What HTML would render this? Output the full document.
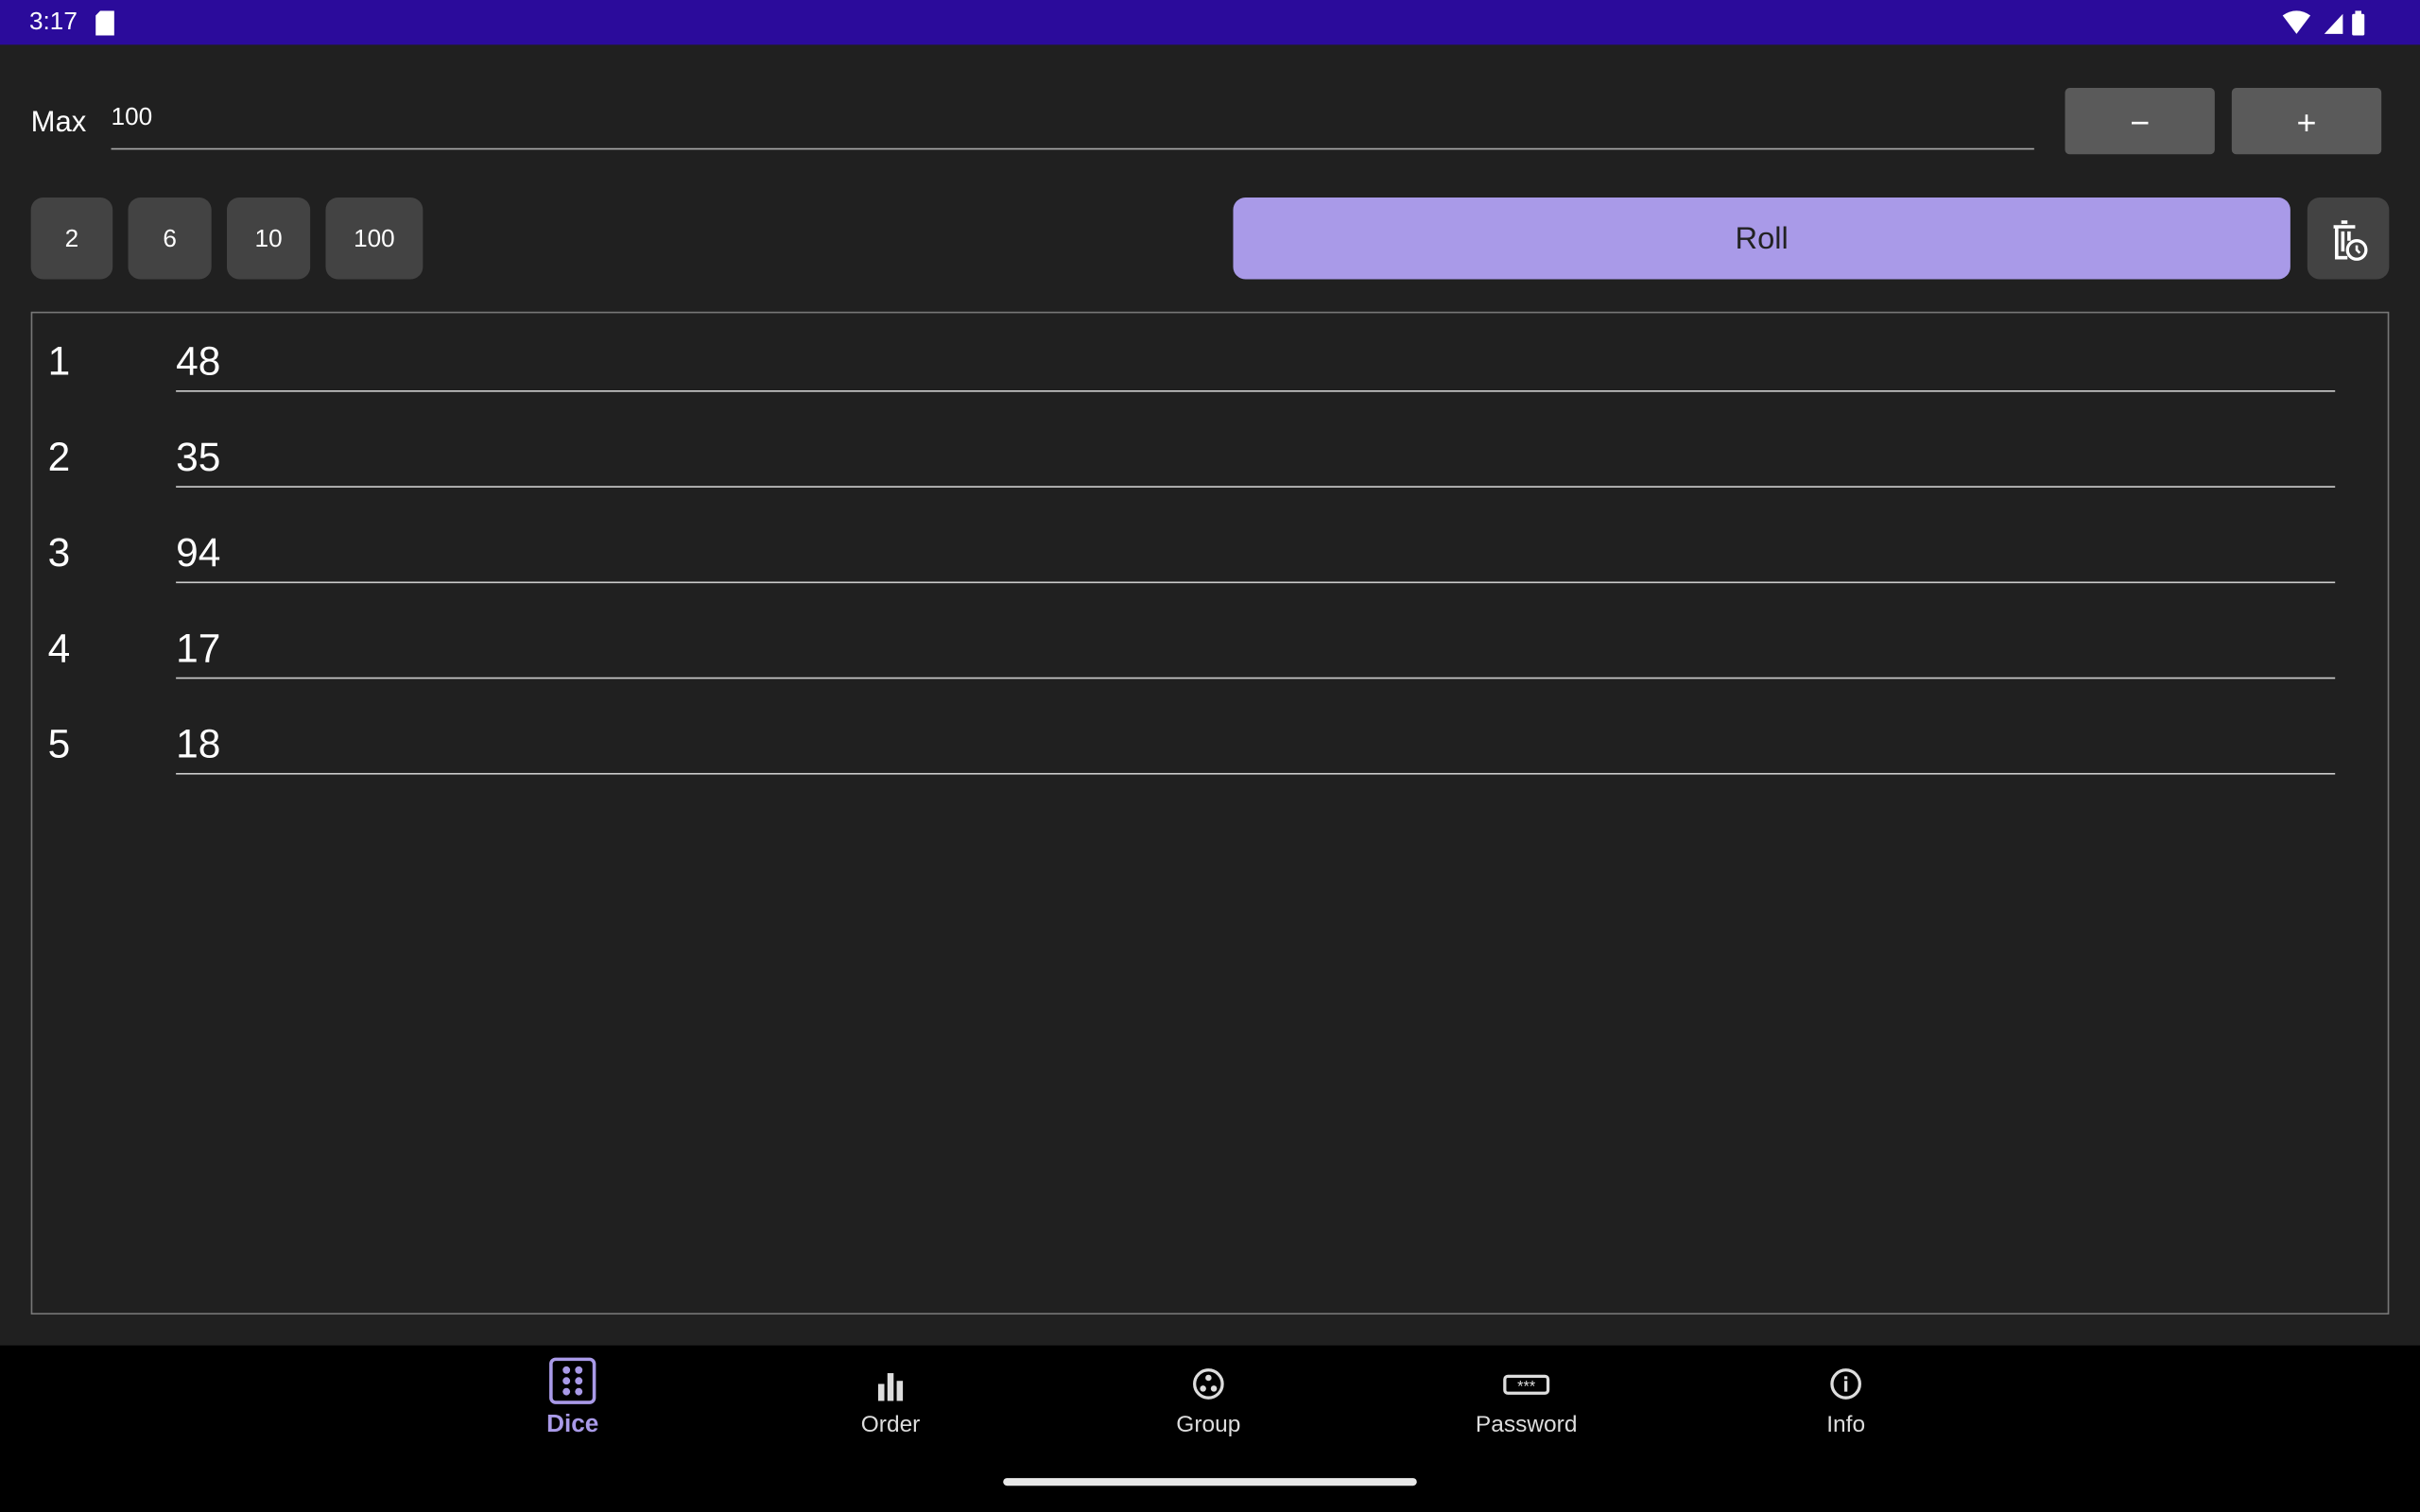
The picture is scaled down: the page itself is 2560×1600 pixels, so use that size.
<!DOCTYPE html>
<html><head><meta charset="utf-8"><style>
html,body{margin:0;padding:0;background:#202020;overflow:hidden;width:2560px;height:1600px}
#s{position:absolute;left:0;top:0;width:1568px;height:980px;transform:scale(1.632653);transform-origin:0 0;font-family:"Liberation Sans",Roboto,sans-serif;color:#fff}
.a{position:absolute}
.chip{position:absolute;top:128px;height:53px;padding-top:2px;box-sizing:border-box;background:#434343;border-radius:8px;display:flex;align-items:center;justify-content:center;font-size:16px}
.num{position:absolute;left:31px;font-size:26px}
.val{position:absolute;left:114px;font-size:26px}
.ul{position:absolute;left:114px;width:1399px;height:1px;background:#ccc}
.nav{position:absolute;top:883px;width:120px;text-align:center;font-size:15px;color:#ddd}
.nav svg{display:block;margin:0 auto 4px}
</style></head><body><div id="s">
<div class="a" style="left:0;top:0;width:1568px;height:29px;background:#2b0b9b"></div>
<div class="a" style="left:19px;top:6px;font-size:16px">3:17</div>
<svg class="a" style="left:61px;top:7px" width="14" height="16"><path d="M4 0h9v16H1V3z" fill="#fff"/></svg>
<svg class="a" style="left:1478px;top:6px" width="60" height="18"><path d="M1 4Q10-2 19 4L10 16z" fill="#fff"/><path d="M28 16L40 3V16z" fill="#fff"/><rect x="46" y="3" width="8" height="14" rx="1" fill="#fff"/><rect x="48" y="1" width="4" height="3" fill="#fff"/></svg>

<div class="a" style="left:20px;top:69px;font-size:19px">Max</div>
<div class="a" style="left:72px;top:68px;font-size:16px">100</div>
<div class="a" style="left:72px;top:96px;width:1246px;height:1px;background:#aaa"></div>
<div class="a" style="left:1338px;top:57px;width:97px;height:43px;background:#5a5a5a;border-radius:3px;text-align:center;line-height:45px;font-size:22px">−</div>
<div class="a" style="left:1446px;top:57px;width:97px;height:43px;background:#5a5a5a;border-radius:3px;text-align:center;line-height:45px;font-size:22px">+</div>

<div class="chip" style="left:20px;width:53px">2</div>
<div class="chip" style="left:83px;width:54px">6</div>
<div class="chip" style="left:147px;width:54px">10</div>
<div class="chip" style="left:211px;width:63px">100</div>
<div class="chip" style="left:799px;width:685px;background:#a99ae8;color:#222;font-size:20px">Roll</div>
<div class="chip" style="left:1495px;width:53px"><svg width="26" height="28" viewBox="0 0 26 28"><path d="M3 5h14M8 2h4M5 5v20h7M9 8v13M13 8v6" stroke="#fff" stroke-width="2.2" fill="none"/><circle cx="18" cy="20" r="6" fill="none" stroke="#fff" stroke-width="2"/><path d="M18 17v3l2 2" stroke="#fff" stroke-width="1.6" fill="none"/></svg></div>

<div class="a" style="left:20px;top:202px;width:1526px;height:648px;border:1px solid #777"></div>
<div class="num" style="top:219px">1</div><div class="val" style="top:219px">48</div><div class="ul" style="top:253px"></div>
<div class="num" style="top:281px">2</div><div class="val" style="top:281px">35</div><div class="ul" style="top:315px"></div>
<div class="num" style="top:343px">3</div><div class="val" style="top:343px">94</div><div class="ul" style="top:377px"></div>
<div class="num" style="top:405px">4</div><div class="val" style="top:405px">17</div><div class="ul" style="top:439px"></div>
<div class="num" style="top:467px">5</div><div class="val" style="top:467px">18</div><div class="ul" style="top:501px"></div>

<div class="a" style="left:0;top:872px;width:1568px;height:108px;background:#000"></div>
<div class="nav" style="left:311px;top:879px;color:#a99ae8;font-weight:bold;font-size:16px"><svg width="32" height="32" viewBox="0 0 32 32"><rect x="2" y="2" width="28" height="28" rx="3" fill="none" stroke="#a99ae8" stroke-width="2.2"/><g fill="#a99ae8"><circle cx="12" cy="9" r="2.4"/><circle cx="20" cy="9" r="2.4"/><circle cx="12" cy="16" r="2.4"/><circle cx="20" cy="16" r="2.4"/><circle cx="12" cy="23" r="2.4"/><circle cx="20" cy="23" r="2.4"/></g></svg>Dice</div>
<div class="nav" style="left:517px"><svg width="24" height="28" viewBox="0 0 24 28"><g fill="#ddd"><rect x="4" y="14" width="4" height="11"/><rect x="10" y="7" width="4" height="18"/><rect x="16" y="12" width="4" height="13"/></g></svg>Order</div>
<div class="nav" style="left:723px"><svg width="24" height="28" viewBox="0 0 24 28"><circle cx="12" cy="14" r="9" fill="none" stroke="#ddd" stroke-width="2"/><g fill="#ddd"><circle cx="12" cy="10" r="2"/><circle cx="8.5" cy="17" r="2"/><circle cx="15.5" cy="17" r="2"/></g></svg>Group</div>
<div class="nav" style="left:929px"><svg width="32" height="28" viewBox="0 0 32 28"><rect x="2" y="9" width="28" height="11" rx="2" fill="none" stroke="#ddd" stroke-width="2"/><text x="16" y="19" font-size="10" fill="#ddd" text-anchor="middle" font-family="Liberation Sans">***</text></svg>Password</div>
<div class="nav" style="left:1136px"><svg width="24" height="28" viewBox="0 0 24 28"><circle cx="12" cy="14" r="9" fill="none" stroke="#ddd" stroke-width="2"/><rect x="11" y="12" width="2" height="7" fill="#ddd"/><rect x="11" y="9" width="2" height="2" fill="#ddd"/></svg>Info</div>
<div class="a" style="left:650px;top:958px;width:268px;height:5px;border-radius:3px;background:#e8e8e8"></div>
</div></body></html>
